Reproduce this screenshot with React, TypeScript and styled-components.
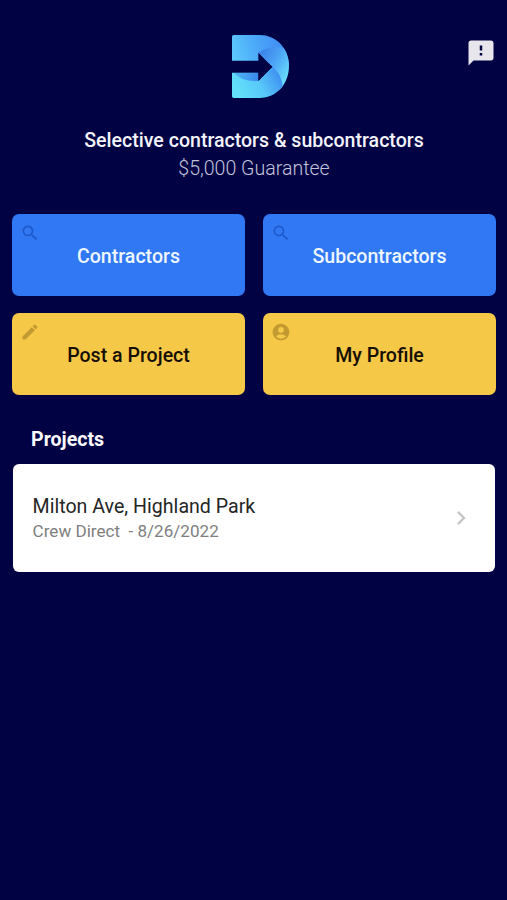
import React from 'react';
import styled, { createGlobalStyle } from 'styled-components';
import { MdSearch, MdEdit, MdAccountCircle, MdFeedback, MdChevronRight } from 'react-icons/md';

const GlobalStyle = createGlobalStyle`
  *, *::before, *::after { box-sizing: border-box; }
  body { margin: 0; background: #000244; }
  h1, h2, h3, p { margin: 0; font-weight: inherit; }
  button { font: inherit; border: 0; }
`;

const Screen = styled.main`
  position: relative;
  min-height: 900px;
  padding: 35px 11px 0 12px;
  background: #000244;
  font-family: Roboto, 'Liberation Sans', sans-serif;
`;

const FeedbackButton = styled.button`
  position: absolute;
  top: 38px;
  right: 11px;
  display: flex;
  padding: 0;
  background: none;
  color: #e6e6ec;
`;

const Header = styled.header`
  display: flex;
  flex-direction: column;
  align-items: center;
`;

const Logo = styled.svg`
  display: block;
  width: 57px;
  height: 63px;
  margin-left: 13px;
`;

const Headline = styled.h1`
  margin-top: 28px;
  padding-top: 1px;
  color: #f4f4fc;
  font-size: 19.57px;
  font-weight: 500;
  line-height: 28px;
  white-space: nowrap;
`;

const Guarantee = styled.p`
  color: #c3c3dc;
  font-size: 19.57px;
  font-weight: 300;
  line-height: 28px;
`;

const Actions = styled.nav`
  display: grid;
  grid-template-columns: 1fr 1fr;
  grid-auto-rows: 82px;
  gap: 17px 18px;
  margin-top: 31.4px;
`;

const ActionButton = styled.button<{ $tone: 'blue' | 'yellow' }>`
  position: relative;
  padding: 2px 0 0;
  border-radius: 7px;
  background: ${({ $tone }) => ($tone === 'blue' ? '#3078f4' : '#f6c847')};
  color: ${({ $tone }) => ($tone === 'blue' ? '#eef6ff' : '#160f04')};
  font-size: 19.57px;
  font-weight: 500;
`;

const ActionIcon = styled.span<{ $tone: 'blue' | 'yellow' }>`
  position: absolute;
  top: 8.4px;
  left: 8px;
  display: flex;
  color: ${({ $tone }) => ($tone === 'blue' ? '#1d59cb' : '#c39a31')};
`;

const SectionTitle = styled.h2`
  margin: 30.6px 0 0 19px;
  color: #fbfbff;
  font-size: 19.6px;
  font-weight: 700;
  line-height: 28px;
`;

const ProjectCard = styled.article`
  display: flex;
  align-items: center;
  justify-content: space-between;
  height: 108px;
  margin: 10px 1px 0;
  padding: 0 20px 0 19.6px;
  border-radius: 6px;
  background: #fff;
`;

const ProjectName = styled.h3`
  padding-top: 2px;
  color: #252525;
  font-size: 19.6px;
  font-weight: 400;
  line-height: 26px;
`;

const ProjectMeta = styled.p`
  color: #808080;
  font-size: 17.08px;
  line-height: 23px;
  white-space: pre;
`;

const Chevron = styled(MdChevronRight)`
  color: #c6c6c6;
`;

const actions = [
  { label: 'Contractors', tone: 'blue', Icon: MdSearch },
  { label: 'Subcontractors', tone: 'blue', Icon: MdSearch },
  { label: 'Post a Project', tone: 'yellow', Icon: MdEdit },
  { label: 'My Profile', tone: 'yellow', Icon: MdAccountCircle },
] as const;

function BrandLogo() {
  return (
    <Logo viewBox="37 30 171 188" preserveAspectRatio="none" aria-hidden="true">
      <defs>
        <linearGradient id="top" gradientUnits="userSpaceOnUse" x1="40" y1="90" x2="180" y2="50">
          <stop offset="0" stopColor="#5cc8fb" />
          <stop offset="0.55" stopColor="#4ba6f8" />
          <stop offset="1" stopColor="#4290f4" />
        </linearGradient>
        <linearGradient id="right" gradientUnits="userSpaceOnUse" x1="125" y1="85" x2="208" y2="135">
          <stop offset="0" stopColor="#3c84ea" />
          <stop offset="0.5" stopColor="#4ca6f6" />
          <stop offset="1" stopColor="#66d6fa" />
        </linearGradient>
        <linearGradient id="bottom" gradientUnits="userSpaceOnUse" x1="60" y1="210" x2="180" y2="145">
          <stop offset="0" stopColor="#62e0fa" />
          <stop offset="0.5" stopColor="#58c8f9" />
          <stop offset="1" stopColor="#3e8ff0" />
        </linearGradient>
        <linearGradient id="inner" x1="0" y1="0" x2="1" y2="0">
          <stop offset="0" stopColor="#4fb9f5" />
          <stop offset="1" stopColor="#3b88ee" />
        </linearGradient>
        <clipPath id="shape">
          <path d="M42 30H120C171 30 208 71 208 122C208 177 171 218 120 218H42Q37 218 37 213V143H116V167L158 125L116 82V107H37V35Q37 30 42 30Z" />
        </clipPath>
      </defs>
      <g clipPath="url(#shape)">
        <rect x="37" y="30" width="171" height="90" fill="url(#top)" />
        <path d="M114 84C135 69 160 65 188 67L212 90V195H180L158 125Z" fill="url(#right)" />
        <path d="M37 140H116V167L158 125C178 142 188 162 189 186L170 220H37Z" fill="url(#bottom)" />
        <path d="M42 143H116V167C86 170 60 162 42 143Z" fill="url(#inner)" />
      </g>
    </Logo>
  );
}

export default function App() {
  return (
    <>
      <GlobalStyle />
      <Screen>
        <FeedbackButton aria-label="Feedback">
          <MdFeedback size={30} />
        </FeedbackButton>
        <Header>
          <BrandLogo />
          <Headline>Selective contractors &amp; subcontractors</Headline>
          <Guarantee>$5,000 Guarantee</Guarantee>
        </Header>
        <Actions>
          {actions.map(({ label, tone, Icon }) => (
            <ActionButton key={label} $tone={tone}>
              <ActionIcon $tone={tone}>
                <Icon size={20} />
              </ActionIcon>
              {label}
            </ActionButton>
          ))}
        </Actions>
        <SectionTitle>Projects</SectionTitle>
        <ProjectCard>
          <div>
            <ProjectName>Milton Ave, Highland Park</ProjectName>
            <ProjectMeta>{'Crew Direct  - 8/26/2022'}</ProjectMeta>
          </div>
          <Chevron size={28} />
        </ProjectCard>
      </Screen>
    </>
  );
}
